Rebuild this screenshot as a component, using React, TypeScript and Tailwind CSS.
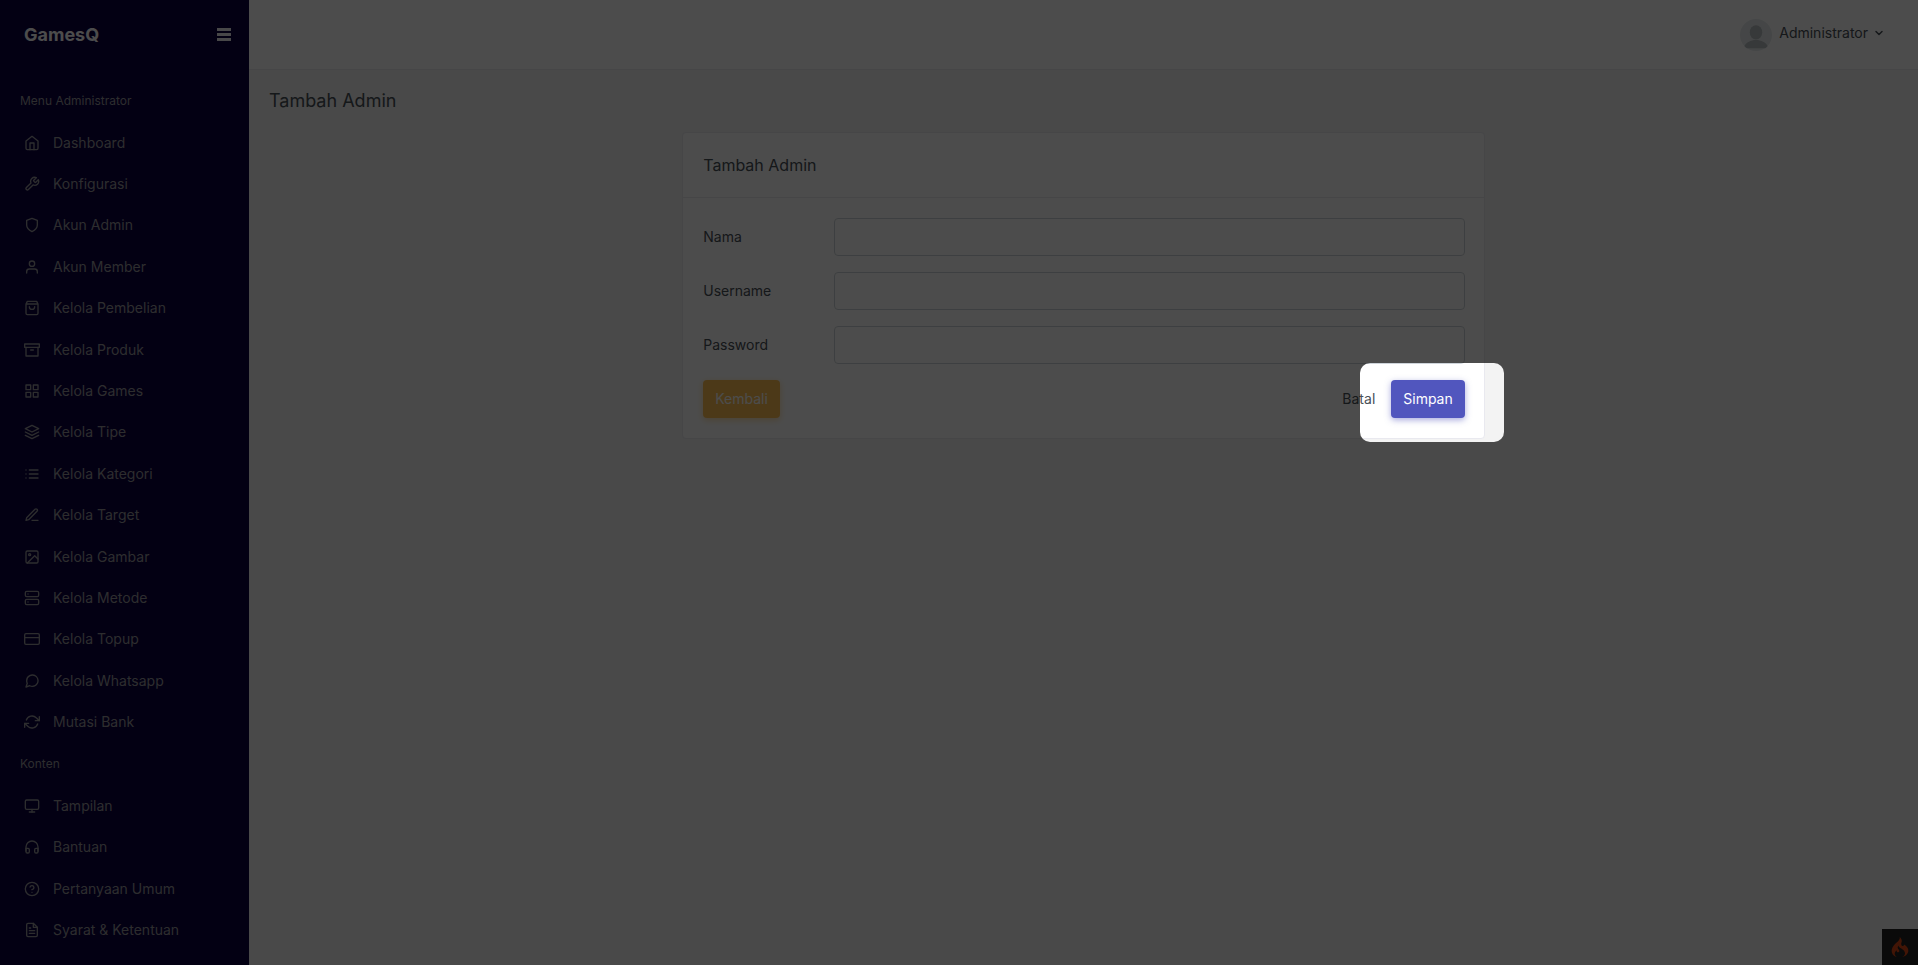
import type { ComponentType, ReactNode } from 'react';
import {
  FiArchive,
  FiChevronDown,
  FiCreditCard,
  FiFileText,
  FiGrid,
  FiHeadphones,
  FiHelpCircle,
  FiHome,
  FiImage,
  FiLayers,
  FiList,
  FiMessageCircle,
  FiMonitor,
  FiRefreshCw,
  FiServer,
  FiShield,
  FiTool,
  FiUser,
} from 'react-icons/fi';
import { SiCodeigniter } from 'react-icons/si';

type MenuItem = { label: string; icon: ComponentType<{ size?: number }> };

const adminMenu: MenuItem[] = [
  { label: 'Dashboard', icon: FiHome },
  { label: 'Konfigurasi', icon: FiTool },
  { label: 'Akun Admin', icon: FiShield },
  { label: 'Akun Member', icon: FiUser },
  { label: 'Kelola Pembelian', icon: BagIcon },
  { label: 'Kelola Produk', icon: FiArchive },
  { label: 'Kelola Games', icon: FiGrid },
  { label: 'Kelola Tipe', icon: FiLayers },
  { label: 'Kelola Kategori', icon: FiList },
  { label: 'Kelola Target', icon: PenIcon },
  { label: 'Kelola Gambar', icon: FiImage },
  { label: 'Kelola Metode', icon: FiServer },
  { label: 'Kelola Topup', icon: FiCreditCard },
  { label: 'Kelola Whatsapp', icon: FiMessageCircle },
  { label: 'Mutasi Bank', icon: FiRefreshCw },
];

const contentMenu: MenuItem[] = [
  { label: 'Tampilan', icon: FiMonitor },
  { label: 'Bantuan', icon: FiHeadphones },
  { label: 'Pertanyaan Umum', icon: FiHelpCircle },
  { label: 'Syarat & Ketentuan', icon: FiFileText },
];

export default function App() {
  return (
    <div className="flex h-screen overflow-hidden bg-[#f3f3f3] font-[Inter,sans-serif] text-sm text-[#495057]">
      <Sidebar />
      <div className="flex min-w-0 flex-1 flex-col">
        <Topbar />
        <main className="px-5 pt-[17px]">
          <h1 className="text-lg text-[#495057]">Tambah Admin</h1>
          <div className="-mx-3 mt-[17px] flex justify-center">
            <div className="w-1/2 px-3">
              <AdminForm />
            </div>
          </div>
        </main>
      </div>
      <button
        type="button"
        aria-label="Debug"
        className="absolute right-0 bottom-0 flex h-9 w-9 items-center justify-center bg-[#222] text-[#dd4814]"
      >
        <SiCodeigniter size={20} />
      </button>
    </div>
  );
}

function Sidebar() {
  return (
    <aside className="w-[249px] shrink-0 overflow-hidden bg-[#0b0042] text-[#98989c]">
      <div className="flex h-[70px] items-center justify-between pr-[18px] pl-6">
        <a href="#" className="text-lg font-bold text-white">
          GamesQ
        </a>
        <button type="button" aria-label="Menu" className="text-[#f0f0f4]">
          <svg width="14" height="14" viewBox="0 0 14 14" fill="currentColor">
            <path d="M0 0h14v3H0zM0 5h14v3H0zM0 10h14v3H0z" />
          </svg>
        </button>
      </div>
      <nav className="pt-2.5">
        <MenuTitle>Menu Administrator</MenuTitle>
        <MenuList items={adminMenu} className="h-[621px]" />
        <MenuTitle>Konten</MenuTitle>
        <MenuList items={contentMenu} className="h-[166px]" />
      </nav>
    </aside>
  );
}

function MenuTitle({ children }: { children: ReactNode }) {
  return <h2 className="flex h-[42px] items-center pl-5 text-xs">{children}</h2>;
}

function MenuList({ items, className }: { items: MenuItem[]; className: string }) {
  return (
    <ul className={`grid auto-rows-fr ${className}`}>
      {items.map(({ label, icon: Icon }) => (
        <li key={label} className="flex">
          <a href="#" className="flex items-center gap-[13px] pl-6 text-sm">
            <Icon size={16} />
            {label}
          </a>
        </li>
      ))}
    </ul>
  );
}

function Topbar() {
  return (
    <header className="flex h-[70px] items-center justify-end border-b border-[#e9e9ef] bg-white pr-[33px]">
      <button type="button" className="flex items-center">
        <svg width="32" height="32" viewBox="0 0 32 32" className="mr-[7px]">
          <circle cx="16" cy="16" r="16" fill="#e6eced" />
          <ellipse cx="16" cy="13.4" rx="6.2" ry="7.2" fill="#b8bec2" />
          <path d="M4.4 27c1.8-3.6 6.4-6 11.6-6s9.8 2.4 11.6 6c-1 1.3-2 2.1-2.4 2.2H6.800C6 28.700 5 28 4.400 27z" fill="#b8bec2" />
        </svg>
        <span className="flex items-center gap-[5px] pb-1">
          Administrator
          <FiChevronDown size={12} strokeWidth={3} />
        </span>
      </button>
    </header>
  );
}

function AdminForm() {
  return (
    <form className="rounded border border-[#e9e9ef] bg-white">
      <div className="flex h-[65px] items-center border-b border-[#e9e9ef] px-5">
        <h2 className="text-base text-[#495057]">Tambah Admin</h2>
      </div>
      <div className="flex flex-col gap-4 py-5 pr-[19px] pl-5">
        <Field id="nama" label="Nama" />
        <Field id="username" label="Username" />
        <Field id="password" label="Password" type="password" />
        <div className="flex items-center justify-between">
          <button
            type="button"
            className="h-[38px] rounded bg-[#ffbf53] px-3 text-white shadow-[0_2px_6px_rgba(255,191,83,0.5)]"
          >
            Kembali
          </button>
          <div className="flex items-center gap-1">
            <button type="reset" className="h-[38px] px-3">
              Batal
            </button>
            <div className="relative">
              <button
                type="submit"
                className="h-[38px] rounded bg-[#5156be] px-3 text-white shadow-[0_2px_6px_rgba(81,86,190,0.5)]"
              >
                Simpan
              </button>
              {/* tour spotlight, its shadow dims the rest of the page */}
              <div className="pointer-events-none absolute -top-[17px] -right-[39px] -bottom-6 -left-[31px] z-50 rounded-[10px] shadow-[0_0_0_3000px_rgba(0,0,0,0.7)]" />
            </div>
          </div>
        </div>
      </div>
    </form>
  );
}

function Field({ id, label, type = 'text' }: { id: string; label: string; type?: string }) {
  return (
    <div className="grid grid-cols-6 items-center gap-6">
      <label htmlFor={id}>{label}</label>
      <input
        id={id}
        type={type}
        className="col-span-5 h-[38px] rounded border border-[#ced4da] bg-white px-3"
      />
    </div>
  );
}

function BagIcon({ size = 16 }: { size?: number }) {
  return (
    <svg width={size} height={size} viewBox="0 0 24 24" fill="none" stroke="currentColor" strokeWidth="2" strokeLinecap="round" strokeLinejoin="round">
      <path d="M5 2h14l2 4v14a2 2 0 0 1-2 2H5a2 2 0 0 1-2-2V6zM3 6h18" />
      <path d="M16 10a4 4 0 0 1-8 0" />
    </svg>
  );
}

function PenIcon({ size = 16 }: { size?: number }) {
  return (
    <svg width={size} height={size} viewBox="0 0 24 24" fill="none" stroke="currentColor" strokeWidth="2" strokeLinecap="round" strokeLinejoin="round">
      <path d="M12 20h9" />
      <path d="M16.5 3.5a2.12 2.12 0 0 1 3 3L7 19l-4 1 1-4z" />
    </svg>
  );
}
